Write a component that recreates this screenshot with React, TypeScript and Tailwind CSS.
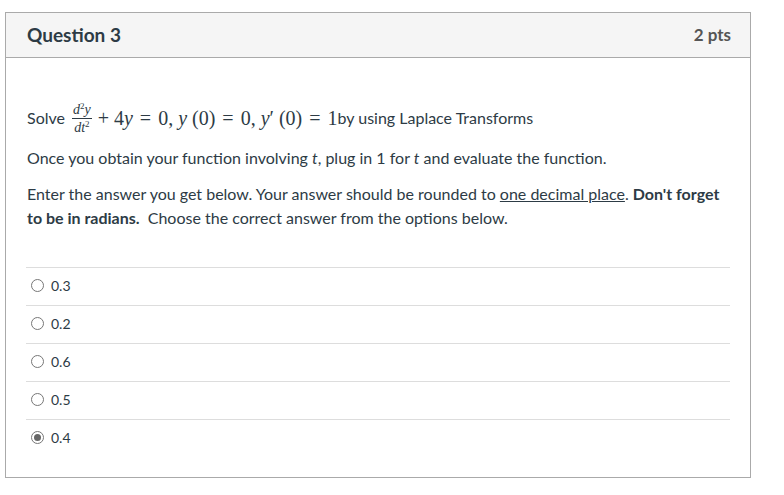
import React from "react";

const options = [
    { id: "a", label: "0.3", checked: false },
    { id: "b", label: "0.2", checked: false },
    { id: "c", label: "0.6", checked: false },
    { id: "d", label: "0.5", checked: false },
    { id: "e", label: "0.4", checked: true },
];

const mathFont = "font-['Liberation_Serif','DejaVu_Serif',serif]";

const Radio = ({ checked }: { checked: boolean }) => (
    <span className="flex h-[13px] w-[13px] items-center justify-center rounded-full border border-[#777] bg-white">
        {checked && <span className="h-[7px] w-[7px] rounded-full bg-[#666]" />}
    </span>
);

const Eq = () => <span className="mx-[2px]">=</span>;

const App = () => {
    return (
        <div className="h-[495px] w-[784px] bg-white pl-[5px] pt-[12px] font-['Lato','Liberation_Sans',sans-serif] text-[#2d3b45]">
            <div className="w-[746px] border border-[#aaa]">
                <div className="flex h-[45px] items-center justify-between border-b border-[#aaa] bg-[#f5f5f5] pl-[21px] pr-[19px]">
                    <h2 className="text-[19px] font-bold text-[#2d3b45]">Question 3</h2>
                    <span className="text-[17px] font-bold text-[#555]">2 pts</span>
                </div>

                <div className="px-[20px] pb-[20px] pt-[42px]">
                    <div className="px-[1px] text-[16px] text-[#2d3b45]">
                        <p className="flex h-[36px] items-center">
                            <span>Solve</span>
                            <span className={`${mathFont} ml-[7px] inline-flex flex-col items-center text-[14px] italic leading-[15px]`}>
                                <span className="px-[1px]">
                                    d<sup className="text-[9px] not-italic">2</sup>y
                                </span>
                                <span className="my-[1px] h-px w-full bg-[#2d3b45]" />
                                <span className="px-[1px]">
                                    dt<sup className="text-[9px] not-italic">2</sup>
                                </span>
                            </span>
                            <span className={`${mathFont} ml-[6px] whitespace-pre text-[20px]`}>
                                + 4<i>y</i> <Eq /> 0, <i>y</i> (0) <Eq /> 0, <i>y</i>′ (0) <Eq /> 1
                            </span>
                            <span>by using Laplace Transforms</span>
                        </p>

                        <p className="mt-[10px] leading-[24px]">
                            Once you obtain your function involving <i>t</i>, plug in 1 for <i>t</i> and evaluate the function.
                        </p>

                        <p className="mt-[12px] leading-[24px]">
                            Enter the answer you get below. Your answer should be rounded to{" "}
                            <span className="underline">one decimal place</span>. <b>Don't forget to be in radians.</b>
                            &nbsp; Choose the correct answer from the options below.
                        </p>
                    </div>

                    <div className="mt-[37px]">
                        {options.map((opt) => (
                            <label
                                key={opt.id}
                                className="flex h-[38px] items-center border-t border-[#ddd] pb-[2px] pl-[5px]"
                            >
                                <Radio checked={opt.checked} />
                                <span className="ml-[7px] text-[14px] text-[#2d3b45]">{opt.label}</span>
                            </label>
                        ))}
                    </div>
                </div>
            </div>
        </div>
    );
};

export default App;
